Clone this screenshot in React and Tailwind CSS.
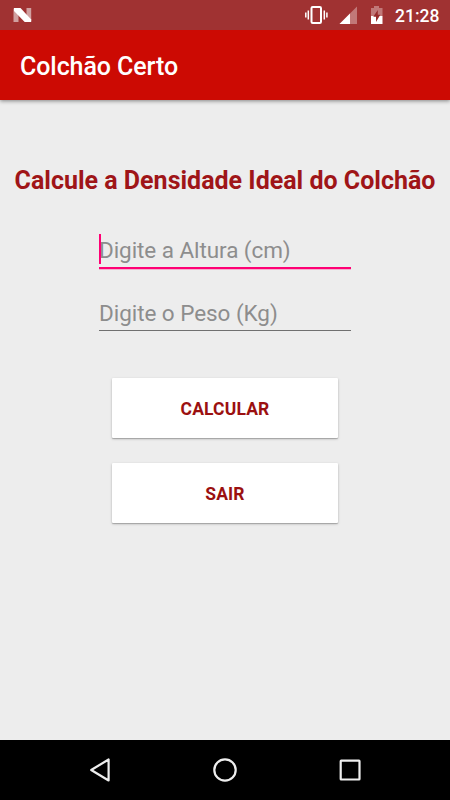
function StatusBar() {
  return (
    <div className="relative z-10 flex h-[30px] items-center justify-between bg-[#a03232]">
      <svg className="ml-3 h-[30px] w-6" viewBox="12 0 24 30" aria-hidden="true">
        <path d="M13.500 8.500h5v13.500h-5zM26.500 8h4.700v13h-4.700z" fill="#d0a0a0" />
        <path d="M14 8h6.500L31.200 19.500v2.500h-6.500L14 11z" fill="#fff" />
      </svg>
      <div className="flex h-full items-center">
        <svg className="h-[30px] w-[100px]" viewBox="295 0 100 30" aria-hidden="true">
          <g fill="none" stroke="#fff">
            <rect x="311.500" y="7" width="9.500" height="16" rx="1.200" strokeWidth="2" />
            <path d="M305.800 12.500v5M308.300 10.500v9M324.300 10.500v9M326.900 12.500v5" strokeWidth="1.500" />
          </g>
          <path d="M357 6.500v17.500h-17.500z" fill="#c17878" />
          <path d="M350 13.500v10.500h-10.500z" fill="#fff" />
          <path d="M374 6h5v2h3.500v8h-11.500v-8h3z" fill="#c17878" />
          <path d="M371 16h11.500v8h-11.500z" fill="#fff" />
          <path d="M377.800 10v4.700h2.500l-4.300 7.300v-5.200h-2.700z" fill="#982b2b" />
        </svg>
        <span className="w-[55px] pt-[2px] text-[17.5px] leading-5 font-medium text-white">21:28</span>
      </div>
    </div>
  );
}

function AppBar() {
  return (
    <header className="flex h-[70px] items-center bg-[#cc0a03] pl-5 shadow-[0_1px_4px_rgba(0,0,0,0.45)]">
      <h1 className="pt-[3px] text-[25px] leading-[30px] font-medium tracking-[-0.08px] text-white">Colchão Certo</h1>
    </header>
  );
}

function Field({ hint, focused }) {
  return (
    <div
      className={
        focused
          ? "relative h-[37px] w-[252px] border-b-[2px] border-[#ff0074] shadow-[0_1px_0_rgba(255,0,116,0.25)]"
          : "relative h-[32px] w-[252px] border-b border-[#707070]"
      }
    >
      {focused && <span className="absolute top-[2px] left-0 h-[30px] w-[2px] bg-[#ff0074]" />}
      <span
        className={
          focused
            ? "block pt-[4px] text-[22.5px] leading-[28px] tracking-[-0.07px] text-[#8d8d8d]"
            : "block text-[22.5px] leading-[28px] tracking-[-0.05px] text-[#8d8d8d]"
        }
      >
        {hint}
      </span>
    </div>
  );
}

function ActionButton({ children }) {
  return (
    <button className="h-[60px] w-[226px] rounded-[1px] bg-white pt-[1px] text-[17.5px] leading-5 font-bold tracking-[0.15px] text-[#9b1010] shadow-[0_1px_3px_rgba(0,0,0,0.2),0_1px_1px_rgba(0,0,0,0.2)]">
      {children}
    </button>
  );
}

function NavBar() {
  return (
    <nav className="flex h-[60px] justify-center bg-black">
      <svg className="h-[60px] w-[310px]" viewBox="70 740 310 60" fill="none" stroke="#eee" strokeWidth="2.200" aria-hidden="true">
        <path d="M108.600 759.500v21L91.200 770z" strokeLinejoin="round" />
        <circle cx="225" cy="770" r="10.700" />
        <rect x="340.700" y="760.700" width="18.800" height="18.800" rx="0.500" />
      </svg>
    </nav>
  );
}

export default function App() {
  return (
    <div className="flex h-[800px] w-[450px] flex-col bg-[#ededed] font-[Roboto,sans-serif]">
      <StatusBar />
      <AppBar />
      <main className="flex flex-1 flex-col items-center pt-[66px]">
        <h2 className="text-[25px] leading-[30px] font-bold whitespace-nowrap text-[#9f1518]">
          Calcule a Densidade Ideal do Colchão
        </h2>
        <div className="mt-9 flex flex-col gap-[30px]">
          <Field hint="Digite a Altura (cm)" focused />
          <Field hint="Digite o Peso (Kg)" />
        </div>
        <div className="mt-[47px] flex flex-col gap-[25px]">
          <ActionButton>CALCULAR</ActionButton>
          <ActionButton>SAIR</ActionButton>
        </div>
      </main>
      <NavBar />
    </div>
  );
}
